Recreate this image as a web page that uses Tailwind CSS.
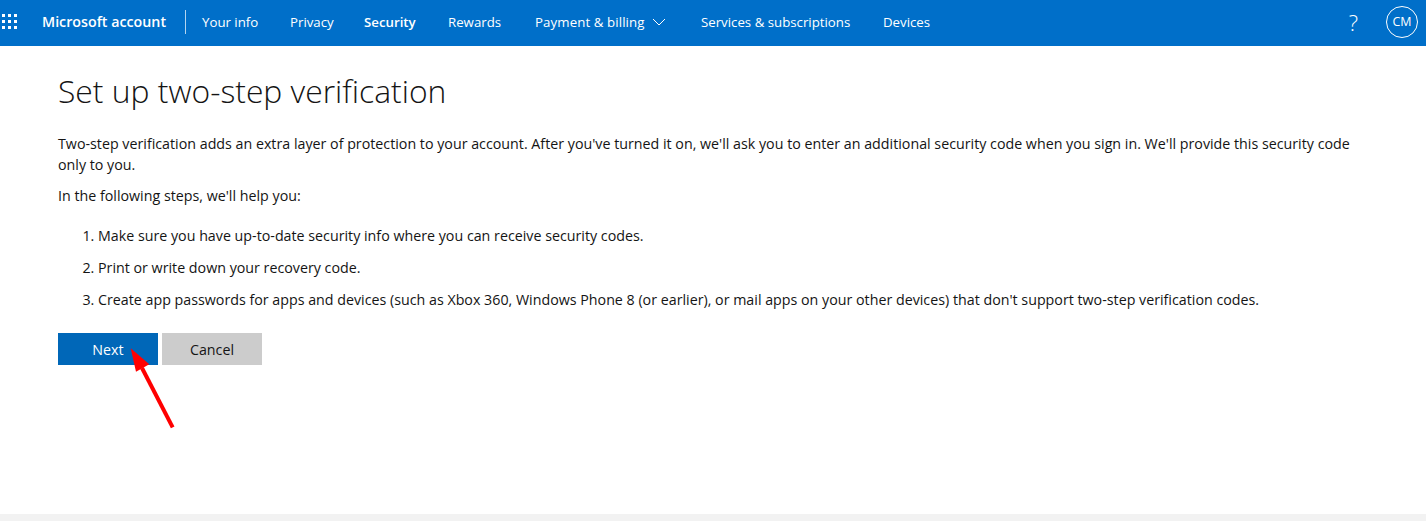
<!DOCTYPE html>
<html lang="en"><head><meta charset="utf-8"><title>Set up two-step verification</title>
<script src="https://cdn.jsdelivr.net/npm/@tailwindcss/browser@4"></script></head>
<body class="bg-white font-['Open_Sans','Noto_Sans',sans-serif] text-[#141414] h-[521px] overflow-hidden flex flex-col relative">
<header class="h-[46px] bg-[#006fc9] text-white flex items-center text-[13.25px] shrink-0 pb-[2px]">
  <svg class="ml-[2px] w-[16px] h-[16px]" viewBox="0 0 16 16" fill="#fff"><rect x="0" y="0" width="3" height="3"/><rect x="6" y="0" width="3" height="3"/><rect x="12" y="0" width="3" height="3"/><rect x="0" y="6" width="3" height="3"/><rect x="6" y="6" width="3" height="3"/><rect x="12" y="6" width="3" height="3"/><rect x="0" y="12" width="3" height="3"/><rect x="6" y="12" width="3" height="3"/><rect x="12" y="12" width="3" height="3"/></svg>
  <span class="ml-[24px] w-[124px] font-semibold text-[14.25px] whitespace-nowrap pb-[1px]">Microsoft account</span>
  <span class="ml-[19px] w-px h-[24px] bg-white/70"></span>
  <nav class="ml-[16px] flex items-center whitespace-nowrap pt-[2px]">
    <span class="w-[88px]">Your info</span><span class="w-[74px]">Privacy</span><span class="w-[84px] font-semibold">Security</span><span class="w-[87px]">Rewards</span><span class="flex items-center w-[166px]"><span class="tracking-[0.1px]">Payment &amp; billing</span><svg class="ml-[7px] w-[14px] h-[14px] -mt-[2px]" viewBox="0 0 14 14" fill="none" stroke="#fff" stroke-width="1"><path d="M1 4l6 6 6-6"/></svg></span><span class="w-[182px]">Services &amp; subscriptions</span><span>Devices</span>
  </nav>
  <span class="ml-auto text-[22px] font-light leading-none">?</span>
  <span class="ml-[28px] mr-[8px] w-[32px] h-[32px] rounded-full border border-white flex items-center justify-center text-[12.5px] pt-[1px]">CM</span>
</header>
<main class="flex-1 pl-[58px] pr-[60px]">
  <h1 class="mt-[23px] text-[31.85px] leading-[44px] font-light">Set up two-step verification</h1>
  <p class="mt-[20px] text-[14.25px] leading-[21px]">Two-step verification adds an extra layer of protection to your account. After you've turned it on, we'll ask you to enter an additional security code when you sign in. We'll provide this security code only to you.</p>
  <p class="mt-[10px] text-[14.25px] leading-[21px]">In the following steps, we'll help you:</p>
  <ol class="mt-[19px] ml-[24px] list-decimal list-outside pl-[16px] text-[14.25px] leading-[21px] flex flex-col gap-[11px]">
    <li>Make sure you have up-to-date security info where you can receive security codes.</li>
    <li>Print or write down your recovery code.</li>
    <li>Create app passwords for apps and devices (such as Xbox 360, Windows Phone 8 (or earlier), or mail apps on your other devices) that don't support two-step verification codes.</li>
  </ol>
  <div class="mt-[23px] flex gap-[4px] text-[14.25px]">
    <button class="w-[100px] h-[32px] pt-[1px] bg-[#0067b8] text-white">Next</button>
    <button class="w-[100px] h-[32px] pt-[1px] bg-[#cccccc]">Cancel</button>
  </div>
</main>
<footer class="h-[7px] bg-[#f2f2f2] shrink-0"></footer>
<svg class="absolute left-[125px] top-[345px] w-[55px] h-[90px]" viewBox="0 0 55 90" fill="none"><path d="M47.7 82.3L17 23" stroke="#ff0000" stroke-width="4"/><path d="M5.7 3.3L11 26.7L24.3 19.3Z" fill="#ff0000"/></svg>
</body></html>
